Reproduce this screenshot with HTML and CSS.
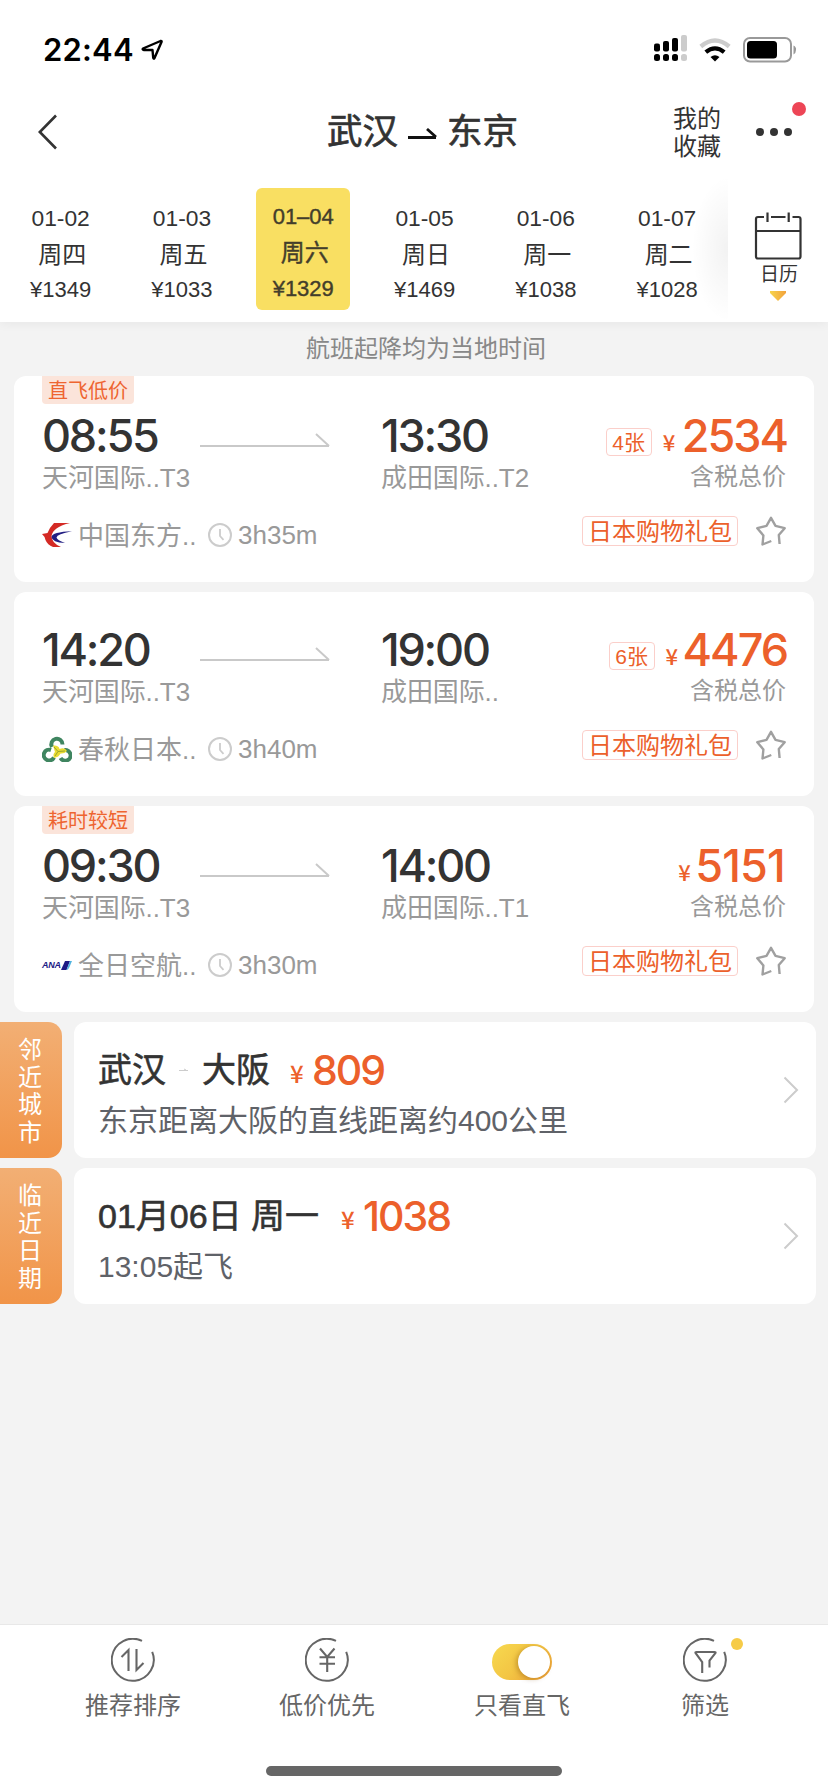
FILE: index.html
```html
<!DOCTYPE html>
<html lang="zh-CN">
<head>
<meta charset="utf-8">
<title>武汉 - 东京</title>
<link rel="stylesheet" href="styles.css">
</head>
<body>
<svg class="defs" width="0" height="0">
  <defs>
    <symbol id="arrow" viewBox="0 0 130 16"><path d="M0 13H129M116 1L129 13" fill="none" stroke="#c9c9c9" stroke-width="2"/></symbol>
    <symbol id="clock" viewBox="0 0 24 24"><circle cx="12" cy="12" r="11" fill="none" stroke="#ccc" stroke-width="2"/><path d="M12 6v7l3.500 3.800" fill="none" stroke="#ccc" stroke-width="1.800"/></symbol>
    <symbol id="star" viewBox="0 0 30 30"><path d="M15.300 25L6.500 28.500L7.400 19.500L1.300 12.200L10.500 9.800L15 1.800L19.500 9.800L28.700 12.200L22.800 19L23.600 28" fill="none" stroke="#a0a0a0" stroke-width="2.400" stroke-linejoin="round"/></symbol>
    <symbol id="ring" viewBox="0 0 44 44"><path d="M31 2.900A21 21 0 1 0 41.200 13.800" fill="none" stroke="#666" stroke-width="2"/></symbol>
    <symbol id="chevron" viewBox="0 0 16 28"><path d="M1.500 1.500L14 14L1.500 26.500" fill="none" stroke="#ccc" stroke-width="2"/></symbol>
    <linearGradient id="gold"><stop offset="0" stop-color="#f7d44c"/><stop offset="1" stop-color="#f2a23c"/></linearGradient>
  </defs>
</svg>

<div class="top">
  <div class="status">
    <span class="clock-text">22:44</span>
    <svg class="loc" width="23" height="22" viewBox="0 0 23 22"><path d="M2 9.500L19.500 2Q21 1.500 20.500 3L13.500 19Q12.500 20.500 12.200 18.500L11.500 11L3 11Q1 10.500 2 9.500Z" fill="none" stroke="#000" stroke-width="2.400" stroke-linejoin="round"/></svg>
    <svg class="signal" width="34" height="28" viewBox="0 0 34 28">
      <g><rect x="0" y="8.500" width="6" height="8" rx="2"/><rect x="9" y="6" width="6" height="10.500" rx="2"/><rect x="18" y="3" width="6" height="13.500" rx="2"/><rect x="27" y="0" width="6" height="16.500" rx="2" fill="#ccc"/><rect x="0" y="19" width="6" height="7" rx="2.500"/><rect x="9" y="19" width="6" height="7" rx="2.500"/><rect x="18" y="19" width="6" height="7" rx="2.500"/><rect x="27" y="19" width="6" height="7" rx="2.500" fill="#ccc"/></g>
    </svg>
    <svg class="wifi" width="32" height="24" viewBox="0 0 32 24"><path d="M1.800 8.500Q16-3.500 30.200 8.500" fill="none" stroke="#ccc" stroke-width="4.400"/><path d="M6.800 14.200Q16 6.500 25.200 14.200" fill="none" stroke="#000" stroke-width="4.200"/><path d="M11.500 19Q16 15.500 20.500 19L16 23.500Z"/></svg>
    <svg class="battery" width="54" height="26" viewBox="0 0 54 26"><rect x="1" y="1" width="47" height="23.500" rx="6" fill="none" stroke="#999" stroke-width="2"/><rect x="4" y="4" width="30" height="17.500" rx="3.500"/><path d="M50.500 8.500Q53.500 10 53 13Q53 16 50.500 17.500Z" fill="#999"/></svg>
  </div>
  <div class="nav">
    <svg class="back" width="20" height="36" viewBox="0 0 20 36"><path d="M18 1.500L1.800 18L18 34.500" fill="none" stroke="#333" stroke-width="2.600"/></svg>
    <div class="title"><span>武汉</span><svg width="30" height="12" viewBox="0 0 30 12"><path d="M0 9.500H28M19 1L28 9" fill="none" stroke="#111" stroke-width="2.800"/></svg><span>东京</span></div>
    <div class="fav">我的<br>收藏</div>
    <div class="more"><i></i><i></i><i></i><b class="red-dot"></b></div>
  </div>
  <div class="dates">
    <div class="day"><span>01-02</span><span class="wk">周四</span><span class="pr">¥1349</span></div>
    <div class="day"><span>01-03</span><span class="wk">周五</span><span class="pr">¥1033</span></div>
    <div class="day"><div class="sel"><span class="md">01–04</span><span class="wk">周六</span><span class="pr">¥1329</span></div></div>
    <div class="day"><span>01-05</span><span class="wk">周日</span><span class="pr">¥1469</span></div>
    <div class="day"><span>01-06</span><span class="wk">周一</span><span class="pr">¥1038</span></div>
    <div class="day"><span>01-07</span><span class="wk">周二</span><span class="pr">¥1028</span></div>
    <div class="calendar">
      <svg width="48" height="48" viewBox="0 0 48 48"><path d="M10 5H4Q2 5 2 7V44.500Q2 46.500 4 46.500H44.500Q46.500 46.500 46.500 44.500V7Q46.500 5 44.500 5H38.500M17 5H31.500M13.500 0.500V10M34.700 0.500V10M2 19H46.500" fill="none" stroke="#333" stroke-width="2.200"/></svg>
      <span>日历</span>
      <svg width="16" height="10" viewBox="0 0 16 10"><path d="M0 0H16V2L8 10L0 2Z" fill="url(#gold)"/></svg>
    </div>
  </div>
</div>

<div class="notice">航班起降均为当地时间</div>

<div class="list">
  <div class="card tagged">
    <span class="tag">直飞低价</span>
    <div class="row times">
      <span class="dep">08:55</span><svg class="arr" width="130" height="16"><use href="#arrow"/></svg><span class="dst">13:30</span>
      <span class="price"><em>4张</em><small>¥</small><strong>2534</strong></span>
    </div>
    <div class="row ports"><span class="dep">天河国际..T3</span><span class="dst">成田国际..T2</span><span class="tax">含税总价</span></div>
    <div class="row air">
      <svg class="logo" width="30" height="24" viewBox="0 0 30 24"><path d="M0 11L5.500 10Q8 4 12 0H28Q11 4 9.500 13Q9.500 20 19 24H11Q5.500 22 3.500 17Q2.500 13 0 11Z" fill="#d42a25"/><path d="M30 8.300Q10 9 9.500 14Q10 19.500 23 20Q15 17 14.500 14.500Q15 11 30 8.300Z" fill="#231f83"/></svg>
      <span class="name">中国东方..</span><svg width="24" height="24"><use href="#clock"/></svg><span class="dur">3h35m</span>
      <span class="gift">日本购物礼包</span><svg class="star" width="30" height="30"><use href="#star"/></svg>
    </div>
  </div>

  <div class="card">
    <div class="row times">
      <span class="dep">14:20</span><svg class="arr" width="130" height="16"><use href="#arrow"/></svg><span class="dst">19:00</span>
      <span class="price"><em>6张</em><small class="mid">¥</small><strong>4476</strong></span>
    </div>
    <div class="row ports"><span class="dep">天河国际..T3</span><span class="dst">成田国际..</span><span class="tax">含税总价</span></div>
    <div class="row air">
      <svg class="logo" width="30" height="26" viewBox="0 0 30 26"><g fill="none" stroke="#3f8560" stroke-width="4"><path d="M10 11A5.600 5.600 0 1 1 20.500 8.500"/><path d="M9 14A5.400 5.400 0 1 0 12 21.500"/><path d="M22.500 14A5.400 5.400 0 1 1 18.500 22"/></g><path d="M11 9.500Q17 9 17.500 13Q23 11 25 15Q22 18 18.500 17.500Q17 21 12 22Q10.500 18 13 16Z" fill="#e9dc34"/><path d="M12 11L16 15.500L23 15M16 15.500L13 20" stroke="#9aa52c" fill="none"/></svg>
      <span class="name">春秋日本..</span><svg width="24" height="24"><use href="#clock"/></svg><span class="dur">3h40m</span>
      <span class="gift">日本购物礼包</span><svg class="star" width="30" height="30"><use href="#star"/></svg>
    </div>
  </div>

  <div class="card tagged">
    <span class="tag">耗时较短</span>
    <div class="row times">
      <span class="dep">09:30</span><svg class="arr" width="130" height="16"><use href="#arrow"/></svg><span class="dst">14:00</span>
      <span class="price"><small class="tight">¥</small><strong>5151</strong></span>
    </div>
    <div class="row ports"><span class="dep">天河国际..T3</span><span class="dst">成田国际..T1</span><span class="tax">含税总价</span></div>
    <div class="row air">
      <span class="logo ana">ANA<svg width="11" height="9" viewBox="0 0 11 9"><path d="M4 0H9L5.500 9H0Z" fill="#1d1b86"/><path d="M9 0H11L8 7Q7 9 5.500 9Z" fill="#4fb4e0"/></svg></span>
      <span class="name">全日空航..</span><svg width="24" height="24"><use href="#clock"/></svg><span class="dur">3h30m</span>
      <span class="gift">日本购物礼包</span><svg class="star" width="30" height="30"><use href="#star"/></svg>
    </div>
  </div>
</div>

<div class="near">
  <div class="side">邻<br>近<br>城<br>市</div>
  <div class="box">
    <div class="info">
      <div class="head"><span>武汉</span><svg class="dash" width="9" height="4" viewBox="0 0 9 4"><path d="M0 2.500H9M5 1L7 2" stroke="#ccc" stroke-width="1" fill="none"/></svg><span>大阪</span><small>¥</small><strong>809</strong></div>
      <div class="sub">东京距离大阪的直线距离约400公里</div>
    </div>
    <svg width="16" height="28"><use href="#chevron"/></svg>
  </div>
</div>
<div class="near">
  <div class="side">临<br>近<br>日<br>期</div>
  <div class="box">
    <div class="info">
      <div class="head"><span class="date">01月06日 周一</span><small>¥</small><strong>1038</strong></div>
      <div class="sub">13:05起飞</div>
    </div>
    <svg width="16" height="28"><use href="#chevron"/></svg>
  </div>
</div>

<div class="bottom">
  <div class="tabs">
    <div class="tab"><div class="ic"><svg width="44" height="44" viewBox="0 0 44 44"><use href="#ring"/><path d="M10.500 19L17.500 12V33M25.500 11V32L32.500 25" fill="none" stroke="#666" stroke-width="2.100"/></svg></div><span>推荐排序</span></div>
    <div class="tab"><div class="ic"><svg width="44" height="44" viewBox="0 0 44 44"><use href="#ring"/><path d="M15 10.500L22.200 19L29.500 10.500M22.200 19V34M14.500 19.200H30M14.500 25.700H30" fill="none" stroke="#666" stroke-width="2.100"/></svg></div><span>低价优先</span></div>
    <div class="tab"><div class="ic"><div class="toggle"><i></i></div></div><span>只看直飞</span></div>
    <div class="tab"><div class="ic"><svg width="44" height="44" viewBox="0 0 44 44"><use href="#ring"/><path d="M19.200 35V24L12.500 15Q12 14 13.500 14H31.500Q33 14 32.500 15L26.500 22.500V29.500" fill="none" stroke="#666" stroke-width="2.100"/></svg><b class="gold-dot"></b></div><span>筛选</span></div>
  </div>
  <div class="home"></div>
</div>
</body>
</html>
```
FILE: styles.css
```css
* { box-sizing: border-box; }
body {
  margin: 0;
  width: 828px;
  height: 1792px;
  overflow: hidden;
  display: flex;
  flex-direction: column;
  background: #f3f3f3;
  color: #333;
  font-family: "Liberation Sans", "Noto Sans CJK SC", sans-serif;
}
svg { display: block; flex: none; }
.defs { position: absolute; }
i, em { font-style: normal; }

.top { height: 322px; background: #fff; box-shadow: 0 2px 10px rgba(0,0,0,.05); }
.status { height: 88px; padding: 11px 32px 0 43px; display: flex; align-items: center; }
.clock-text { font: 600 31px/32px Inter, sans-serif; color: #000; letter-spacing: 0.200px; }
.loc { margin-left: 7px; }
.signal { margin-left: auto; margin-right: 11px; margin-top: -1px; }
.wifi { margin-right: 12px; }
.battery { margin-right: -1px; }

.nav { height: 88px; display: flex; align-items: center; padding-left: 38px; }
.back { width: 20px; }
.title { margin-left: 269px; width: 193px; flex: none; white-space: nowrap; display: flex; align-items: center; font-size: 35.500px; line-height: 44px; -webkit-text-stroke: 0.700px #333; }
.title svg { margin: 3px 9px 0 10px; }
.fav { margin-left: 153px; font-size: 24px; line-height: 28px; width: 48px; flex: none; padding-top: 1px; }
.more { position: relative; display: flex; gap: 6px; margin-left: 35px; }
.more i { width: 8px; height: 8px; border-radius: 50%; background: #333; }
.red-dot { position: absolute; right: -14px; top: -26px; width: 14px; height: 14px; border-radius: 50%; background: #ed4556; }

.dates { height: 146px; display: flex; position: relative; }
.day { width: 121.300px; flex: none; display: flex; flex-direction: column; align-items: center; font-size: 22.800px; line-height: 36px; padding-top: 24px; }
.day .wk { font-size: 24px; padding-left: 3px; padding-top: 1px; height: 36px; }
.day .pr { font-size: 22px; }
.sel { width: 94px; height: 122px; margin-top: -12px; padding-top: 11px; border-radius: 6px; background: #f9df62; display: flex; flex-direction: column; align-items: center; color: #433d2b; -webkit-text-stroke: 0.400px #433d2b; }
.sel .md { font-size: 22px; }
.sel .wk { padding-top: 0; }
.calendar { position: absolute; left: 728px; top: 0; width: 100px; height: 146px; background: #fff; display: flex; flex-direction: column; align-items: center; padding: 36px 0 0; }
.calendar::before { content: ""; position: absolute; right: 100px; top: 0; width: 36px; height: 146px; background: radial-gradient(ellipse 36px 73px at 100% 50%, rgba(0,0,0,.05), rgba(0,0,0,0)); }
.calendar span { font-size: 19px; line-height: 26px; margin: 2px 0 3px 2px; }

.notice { height: 54px; line-height: 54px; font-size: 24px; text-align: center; color: #888; padding-left: 24px; }

.list { padding: 0 14px; display: flex; flex-direction: column; gap: 10px; }
.card { position: relative; height: 204px; padding: 34px 28px 0; border-radius: 12px; background: #fff; }
.card.tagged { height: 206px; padding-top: 36px; }
.tag { position: absolute; left: 28px; top: 0; width: 92px; height: 28px; line-height: 31px; text-align: center; font-size: 20px; color: #ee6530; background: #fbe4da; border-radius: 0 0 4px 4px; }
.row { display: flex; }
.times { height: 47px; line-height: 47px; }
.times .dep, .times .dst { font: 500 45px/47px Inter, sans-serif; letter-spacing: -2.200px; }
.dep { width: 158px; flex: none; }
.dst { width: 180px; flex: none; }
.arr { margin: 21px 51px 0 0; }
.price { margin-left: auto; display: flex; color: #ec602b; }
.price em { width: 46px; height: 28px; margin: 16px 11px 0 0; border: 1px solid #fbcfca; border-radius: 4px; text-align: center; font-size: 21px; line-height: 28px; }
.price small { font: 500 22px/32px "Noto Sans CJK SC", sans-serif; width: 13px; margin: 13px 6px 0 0; }
.price small.mid { margin-right: 4px; }
.price small.tight { margin-right: 4px; }
.price strong { font: 500 45px/47px Inter, sans-serif; letter-spacing: -2px; margin-right: -1px; }
.price .tight + strong { letter-spacing: -0.800px; margin-right: 1px; }
.ports { height: 36px; margin-top: 1px; line-height: 36px; font-size: 26px; color: #999; }
.ports .dep { width: 339px; letter-spacing: -0.100px; }
.ports .dst { letter-spacing: -0.100px; }
.tax { margin-left: auto; font-size: 24px; line-height: 34px; }
.air { height: 40px; margin-top: 19px; align-items: center; font-size: 26px; color: #999; }
.logo { width: 30px; }
.name { width: 130px; margin-left: 6px; margin-top: -3px; }
.dur { margin-left: 6px; }
.gift { width: 156px; height: 30px; margin: -8px 18px 0 auto; border: 1px solid #fbcfca; border-radius: 4px; text-align: center; font-size: 24px; line-height: 29px; color: #ec602b; }
.star { margin-top: -8px; }
.ana { display: flex; align-items: center; font: italic bold 9px/10px "Liberation Sans", sans-serif; color: #1d1b86; letter-spacing: -0.300px; }

.near { display: flex; gap: 12px; height: 136px; margin-top: 10px; }
.side { width: 62px; padding: 14px 0 0 18px; font-size: 24px; line-height: 27.700px; color: #fff; border-radius: 0 14px 14px 0; background: linear-gradient(#f2af74, #f19448); }
.box { width: 742px; padding: 0 17px 0 24px; border-radius: 12px; background: #fff; display: flex; align-items: center; justify-content: space-between; }
.info { height: 136px; padding-top: 26px; }
.head { height: 44px; display: flex; line-height: 45px; font-size: 34px; }
.head span { -webkit-text-stroke: 0.600px #333; }
.dash { margin: 20px 14px 0 13px; }
.head small { font: 500 24px/34px "Noto Sans CJK SC", sans-serif; color: #ec602b; margin: 8px 7px 0 20px; width: 15px; }
.head .date + small { margin-left: 22px; }
.head strong { font: 500 41px/44px Inter, sans-serif; letter-spacing: -2px; color: #ec602b; }
.sub { margin-top: 7px; font-size: 30px; line-height: 44px; color: #5f6268; }

.bottom { margin-top: auto; height: 168px; border-top: 1px solid #e8e8e8; background: #fff; }
.tabs { display: grid; grid-template-columns: 194px 194px 196px 170px; padding: 13px 38px 0 36px; height: 141px; }
.tab { display: flex; flex-direction: column; align-items: center; font-size: 24px; color: #666; }
.ic { height: 44px; position: relative; display: flex; align-items: center; }
.tab span { margin-top: 8px; line-height: 32px; }
.toggle { width: 60px; height: 36px; margin-top: 4px; padding: 2px; border-radius: 18px; background: linear-gradient(135deg, #f7d94f, #f3c544 50%, #eb9c34); display: flex; justify-content: flex-end; }
.toggle i { width: 32px; height: 32px; border-radius: 50%; background: #fff; box-shadow: -2px 1px 5px rgba(120,70,0,.35); }
.gold-dot { position: absolute; right: -16px; top: 0; width: 12px; height: 12px; border-radius: 50%; background: #f6cb47; }
.home { width: 296px; height: 10px; border-radius: 5px; margin: 0 auto; background: #666; }
```
